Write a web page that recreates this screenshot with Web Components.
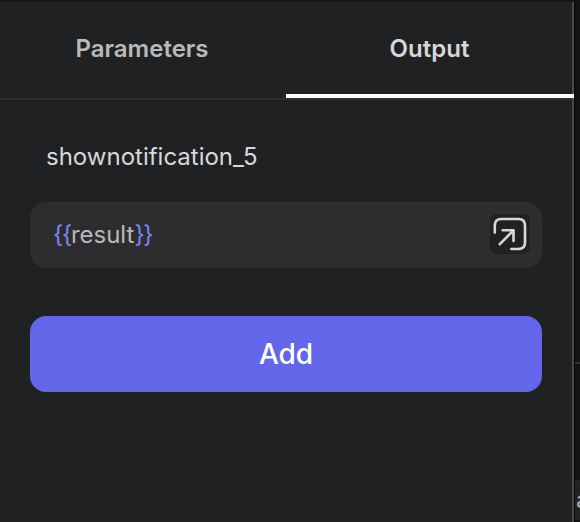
<!DOCTYPE html>
<html lang="en"><head><meta charset="utf-8"><title>Output</title>
<style>
body{margin:0;background:#121213;font-family:Inter,"Liberation Sans",sans-serif;overflow:hidden}
</style></head><body>
<app-shell>
  <side-panel>
    <tab-bar slot="tabs"><tab-item>Parameters</tab-item><tab-item active>Output</tab-item></tab-bar>
    <output-field label="shownotification_5"><token-value>result</token-value><expand-button slot="action"></expand-button></output-field>
    <primary-button>Add</primary-button>
  </side-panel>
  <canvas-edge slot="edge">a</canvas-edge>
</app-shell>
<script>
const define = (name, html) => customElements.define(name, class extends HTMLElement {
  constructor() {
    super();
    this.attachShadow({ mode: 'open' }).innerHTML = html;
  }
  connectedCallback() {
    const label = this.shadowRoot.querySelector('.label');
    if (label) label.textContent = this.getAttribute('label');
  }
});

define('app-shell', `<style>
:host{display:flex;width:580px;height:522px;box-sizing:border-box;overflow:hidden}
</style><slot></slot><slot name="edge"></slot>`);

define('side-panel', `<style>
:host{display:flex;flex-direction:column;width:574px;flex:none;height:522px;box-sizing:border-box;background:linear-gradient(#494949,#494949) right/2px 100% no-repeat,#202123;border-top:2px solid #151617}
.body{display:flex;flex-direction:column;gap:48px;padding:42px 32px 0 30px}
</style><slot name="tabs"></slot><div class="body"><slot></slot></div>`);

define('tab-bar', `<style>
:host{display:grid;grid-template-columns:286px 288px;height:98px;box-sizing:border-box;background:linear-gradient(#2d2e30,#2d2e30) left bottom/572px 2px no-repeat}
</style><slot></slot>`);

define('tab-item', `<style>
:host{display:flex;box-sizing:border-box;height:96px;justify-content:center;padding:32px 2px 0 0;font-size:24px;line-height:30px;font-weight:600;color:#bababb;border-bottom:4px solid transparent}
:host([active]){color:#d6d7d9;border-color:#fafafa;padding-right:1px}
</style><span><slot></slot></span>`);

define('output-field', `<style>
:host{display:flex;flex-direction:column;gap:30px}
.label{font-size:24px;line-height:30px;color:#d7d8da;padding-left:16px}
.box{display:flex;align-items:center;justify-content:space-between;height:66px;box-sizing:border-box;border-radius:16px;background:#2d2d2f;padding:0 12px 2px 23px}
</style><div class="label"></div><div class="box"><slot></slot><slot name="action"></slot></div>`);

define('token-value', `<style>
:host{display:block;font-size:24px;line-height:30px;color:#b9b9b9;padding-top:2px}
b{font-weight:400;color:#7885f0;letter-spacing:-1.3px}
</style><b>{{</b><slot></slot><b>}}</b>`);

define('expand-button', `<style>
:host{display:block;width:40px;height:40px;border-radius:7px;background:#202123}
svg{display:block}
</style><svg width="40" height="40" viewBox="0 0 40 40" fill="none" stroke="#d7d8da" stroke-width="2.6" stroke-linecap="round" stroke-linejoin="round"><path d="M4.8 18.6V11.5Q4.8 5 11.3 5H28.5Q35 5 35 11.5V28.5Q35 35 28.5 35H21.3M9.8 30.2L23.5 16.3M12.7 16.3H23.5V27"/></svg>`);

define('primary-button', `<style>
:host{display:block}
button{display:block;width:100%;height:76px;border:0;border-radius:16px;background:#6366e8;color:#fff;font:500 28px/36px Inter,"Liberation Sans",sans-serif;padding:0}
</style><button><slot></slot></button>`);

define('canvas-edge', `<style>
:host{display:grid;grid-template-rows:362px 2px 116px 40px 2px;flex:none;width:6px;box-sizing:border-box;border-left:1px solid #050505;overflow:hidden}
.line{background:#343434}
.node{background:#232324;color:#aaa;font-size:24px;line-height:40px;padding-left:1px;overflow:hidden}
</style><i></i><div class="line"></div><i></i><div class="node"><slot></slot></div><i></i>`);
</script></body></html>
